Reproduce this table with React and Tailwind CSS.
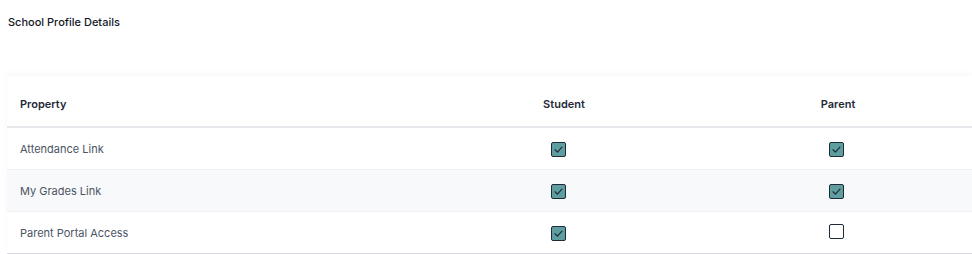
import React from "react";

const rows = [
    { name: "Attendance Link", student: true, parent: true },
    { name: "My Grades Link", student: true, parent: true },
    { name: "Parent Portal Access", student: true, parent: false },
];

const Box = ({ checked }) => (
    <span
        className={`inline-flex items-center justify-center w-[15px] h-[15px] rounded-[2px] border border-[#1f2a37] ${
            checked ? "bg-[#5f9ea0]" : "bg-white"
        }`}
    >
        {checked ? (
            <svg width="11" height="11" viewBox="0 0 12 12" fill="none">
                <path
                    d="M2.2 6.3 L4.8 8.8 L9.8 3.4"
                    stroke="#1f2a37"
                    strokeWidth="1.3"
                    strokeLinecap="round"
                    strokeLinejoin="round"
                />
            </svg>
        ) : null}
    </span>
);

const App = () => {
    return (
        <div
            className="w-[972px] h-[254px] bg-white overflow-hidden"
            style={{ fontFamily: "Inter, 'Noto Sans', sans-serif" }}
        >
            <div className="pl-2 pt-[14px] h-[76px]">
                <h4 className="text-[11px] font-medium text-[#111827]">
                    School Profile Details
                </h4>
            </div>
            <div className="ml-[7px] shadow-[0_-3px_6px_rgba(0,0,0,0.03)]">
                <table className="w-full border-collapse">
                    <thead>
                        <tr className="h-[51px] border-b-2 border-[#e5e7eb]">
                            <th className="text-left pl-[13px] pt-[6px] text-[11px] font-semibold text-[#1f2937]">
                                Property
                            </th>
                            <th className="w-[280px] pt-[6px] text-[11px] font-semibold text-[#1f2937] text-center">
                                Student
                            </th>
                            <th className="w-[268px] pt-[6px] text-[11px] font-semibold text-[#1f2937] text-center">
                                Parent
                            </th>
                        </tr>
                    </thead>
                    <tbody>
                        {rows.map((r, i) => (
                            <tr
                                key={r.name}
                                className={`h-[42px] border-b ${
                                    i === 2 ? "border-[#d9dbe0]" : "border-[#eef0f3]"
                                } ${i === 1 ? "bg-[#f8f9fb]" : "bg-white"}`}
                            >
                                <td className="pl-[13px] pt-[2px] text-[11px] text-[#4b5563]">
                                    {r.name}
                                </td>
                                <td className="text-center pt-[2px] pr-[12px]">
                                    <Box checked={r.student} />
                                </td>
                                <td className="text-center pt-[2px] pr-[4px]">
                                    <Box checked={r.parent} />
                                </td>
                            </tr>
                        ))}
                    </tbody>
                </table>
            </div>
        </div>
    );
};

export default App;
